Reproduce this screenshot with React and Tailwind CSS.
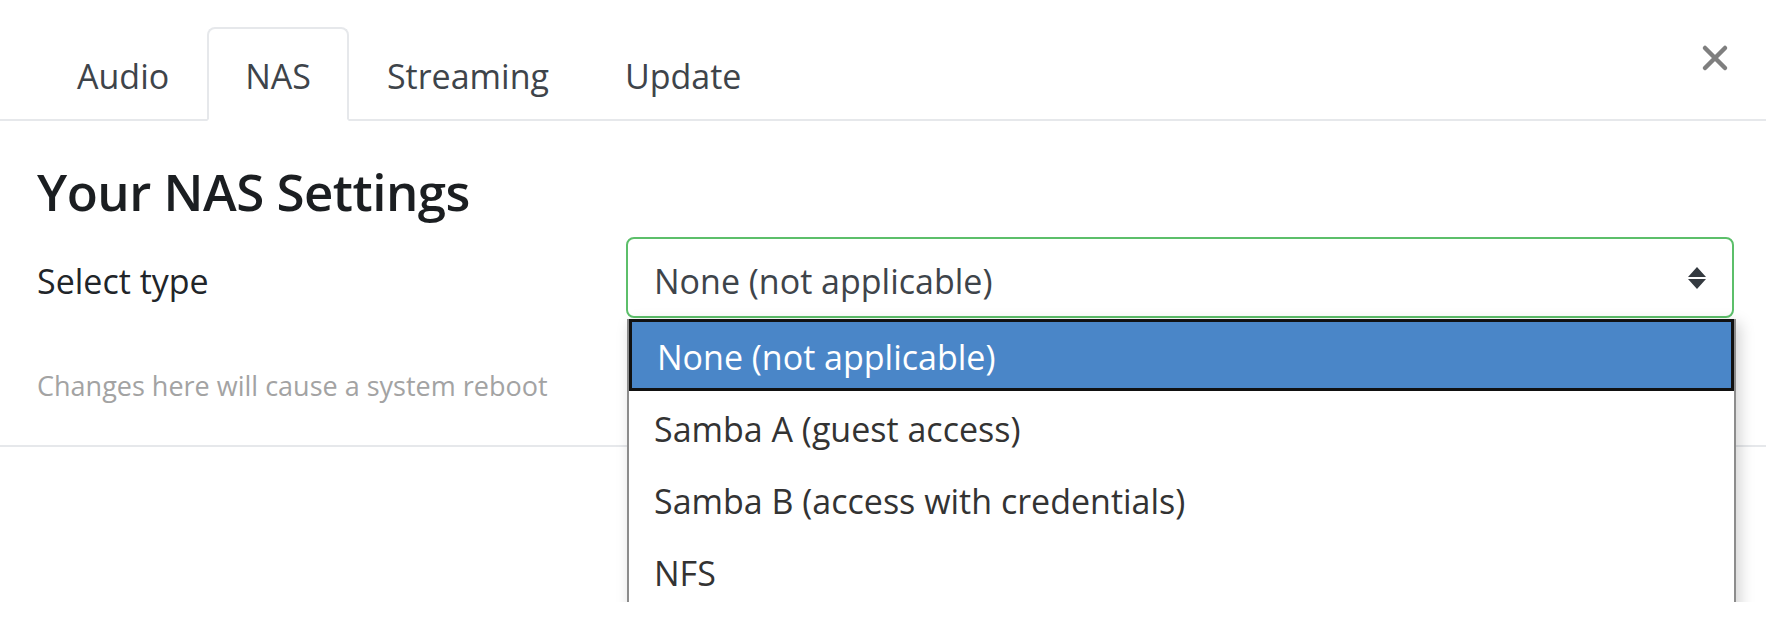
import { useState } from 'react'

const tabs = ['Audio', 'NAS', 'Streaming', 'Update']
const options = ['None (not applicable)', 'Samba A (guest access)', 'Samba B (access with credentials)', 'NFS']

export default function App() {
  const [active, setActive] = useState('NAS')

  return (
    <div className="w-[1772px] h-[628px] bg-white overflow-hidden" style={{ fontFamily: '"Open Sans", "Noto Sans", sans-serif' }}>
      <div className="relative w-[1766px] h-[602px] overflow-hidden bg-white">
        {/* Tabs header */}
        <div className="flex items-end h-[121px] border-b-2 border-[#e6e8eb] pl-[39px] pr-[36px]">
          {tabs.map((t) => (
            <button
              key={t}
              onClick={() => setActive(t)}
              className={`h-[94px] -mb-[2px] px-[36px] pt-[4px] text-[34px] text-[#3e444a] rounded-t-[8px] border-2 ${
                active === t ? 'border-[#e6e8eb] border-b-white bg-white' : 'border-transparent'
              }`}
            >
              {t}
            </button>
          ))}
          <button className="ml-auto self-start mt-[44px] mr-[1px] text-[#7f7f7f]">
            <svg width="28" height="28" viewBox="0 0 28 28">
              <path d="M4 4 L24 24 M24 4 L4 24" stroke="currentColor" strokeWidth="4.5" strokeLinecap="round" />
            </svg>
          </button>
        </div>

        {/* Body */}
        <div className="pl-[37px] pr-[32px] pt-[40px]">
          <h3 className="text-[51px] leading-[60px] font-semibold tracking-[-0.5px] text-[#1b1e21]">Your NAS Settings</h3>
          <div className="flex items-center mt-[16px]">
            <label className="w-[589px] pt-[8px] text-[34px] text-[#212529]">Select type</label>
            <div className="flex items-center flex-1 h-[81px] rounded-[8px] border-2 border-[#5cbf6a] pl-[26px] pr-[26px]">
              <span className="pt-[8px] text-[34px] text-[#3e444a]">None (not applicable)</span>
              <svg className="ml-auto" width="18" height="22" viewBox="0 0 18 22">
                <path d="M9 0 L18 10 L0 10 Z M0 12 L18 12 L9 22 Z" fill="#343a40" />
              </svg>
            </div>
          </div>
          <p className="mt-[48px] text-[27px] text-[#a3a3a3]">Changes here will cause a system reboot</p>
        </div>
        <div className="mt-[38px] border-t-2 border-[#e6e8eb]" />

        {/* Open dropdown list */}
        <ul className="absolute left-[627px] top-[319px] w-[1109px] h-[300px] bg-white border-x-2 border-[#8c8c8c] shadow-[4px_4px_14px_rgba(0,0,0,0.18)]">
          {options.map((o, i) => (
            <li
              key={o}
              className={`flex items-center h-[72px] pt-[5px] pl-[25px] text-[34px] ${
                i === 0 ? 'bg-[#4a86c8] text-white border-[3px] border-[#111] pl-[22px]' : 'text-[#333]'
              }`}
            >
              {o}
            </li>
          ))}
        </ul>
      </div>
    </div>
  )
}
